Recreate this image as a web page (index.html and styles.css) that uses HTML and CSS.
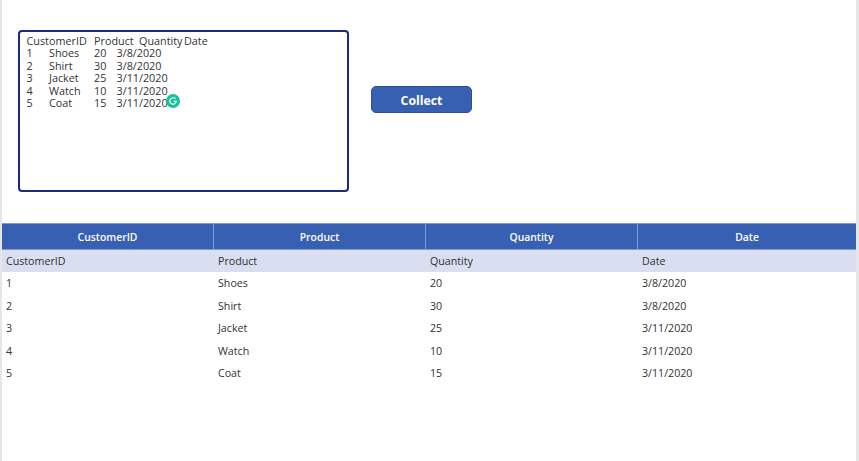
FILE: index.html
```html
<!DOCTYPE html>
<html lang="en">
<head>
<meta charset="utf-8">
<title>Collect</title>
<link rel="stylesheet" href="styles.css">
</head>
<body>
<div class="page">
  <main class="canvas">
    <section class="controls">
      <div class="textbox">
        <pre class="textbox-text">CustomerID	Product	Quantity	Date
1	Shoes	20	3/8/2020
2	Shirt	30	3/8/2020
3	Jacket	25	3/11/2020
4	Watch	10	3/11/2020
5	Coat	15	3/11/2020</pre>
        <svg class="grammarly" viewBox="0 0 14 14" aria-hidden="true">
          <circle cx="7" cy="7" r="7" fill="#15c39a"/>
          <path d="M9.5 4.9A3.2 3.2 0 1 0 10.2 7.4H7.8" fill="none" stroke="#fff" stroke-width="1.2"/>
        </svg>
      </div>
      <button class="collect" type="button">Collect</button>
    </section>
    <section class="table">
      <div class="head">
        <div class="head-cell">CustomerID</div>
        <div class="head-cell">Product</div>
        <div class="head-cell">Quantity</div>
        <div class="head-cell">Date</div>
      </div>
      <div class="row row-alt"><div>CustomerID</div><div>Product</div><div>Quantity</div><div>Date</div></div>
      <div class="row"><div>1</div><div>Shoes</div><div>20</div><div>3/8/2020</div></div>
      <div class="row"><div>2</div><div>Shirt</div><div>30</div><div>3/8/2020</div></div>
      <div class="row"><div>3</div><div>Jacket</div><div>25</div><div>3/11/2020</div></div>
      <div class="row"><div>4</div><div>Watch</div><div>10</div><div>3/11/2020</div></div>
      <div class="row"><div>5</div><div>Coat</div><div>15</div><div>3/11/2020</div></div>
    </section>
  </main>
</div>
</body>
</html>
```
FILE: styles.css
```css
* { box-sizing: border-box; }
html, body { margin: 0; height: 100%; overflow: hidden; }
body {
  background: #fff;
  font-family: "Open Sans", sans-serif;
  color: #323130;
}
.page {
  height: 461px;
  background: #e6e6e6;
  padding: 0 3px 0 2px;
}
.canvas {
  height: 100%;
  background: #fff;
  padding-top: 30px;
}
.controls {
  display: flex;
  align-items: flex-start;
  padding-left: 16px;
  gap: 22px;
  height: 162px;
}
.textbox {
  position: relative;
  width: 331px;
  height: 162px;
  border: 2px solid #1a2a7c;
  border-radius: 4px;
  padding: 2.5px 6.5px;
}
.textbox-text {
  margin: 0;
  font: 10.8px/12.5px "Open Sans", sans-serif;
  color: #333;
  white-space: pre;
  tab-size: 22.5px;
}
.grammarly {
  position: absolute;
  left: 146px;
  top: 62px;
  width: 14px;
  height: 14px;
}
.collect {
  width: 101px;
  height: 27px;
  margin-top: 56px;
  padding: 1px 0 0;
  background: #3860b2;
  border: 1px solid #2c4f96;
  border-radius: 5px;
  color: #fff;
  font: 700 12.3px "Open Sans", sans-serif;
}
.table {
  margin-top: 31px;
  font-size: 10.67px;
}
.head, .row {
  display: grid;
  grid-template-columns: 212px 212px 212px 218px;
}
.head {
  height: 27px;
  background: #3860b2;
  border-top: 1px solid #7f9bd1;
  border-bottom: 1px solid #7f9bd1;
  color: #fff;
}
.head-cell {
  display: flex;
  align-items: center;
  justify-content: center;
  font-size: 10.4px;
  font-weight: 600;
  border-right: 1px solid #7f9bd1;
}
.head-cell:last-child { border-right: 0; }
.row {
  height: 22.5px;
  align-items: center;
}
.row > div { padding-left: 4px; }
.row-alt { background: #d9dff0; height: 22px; }
```
